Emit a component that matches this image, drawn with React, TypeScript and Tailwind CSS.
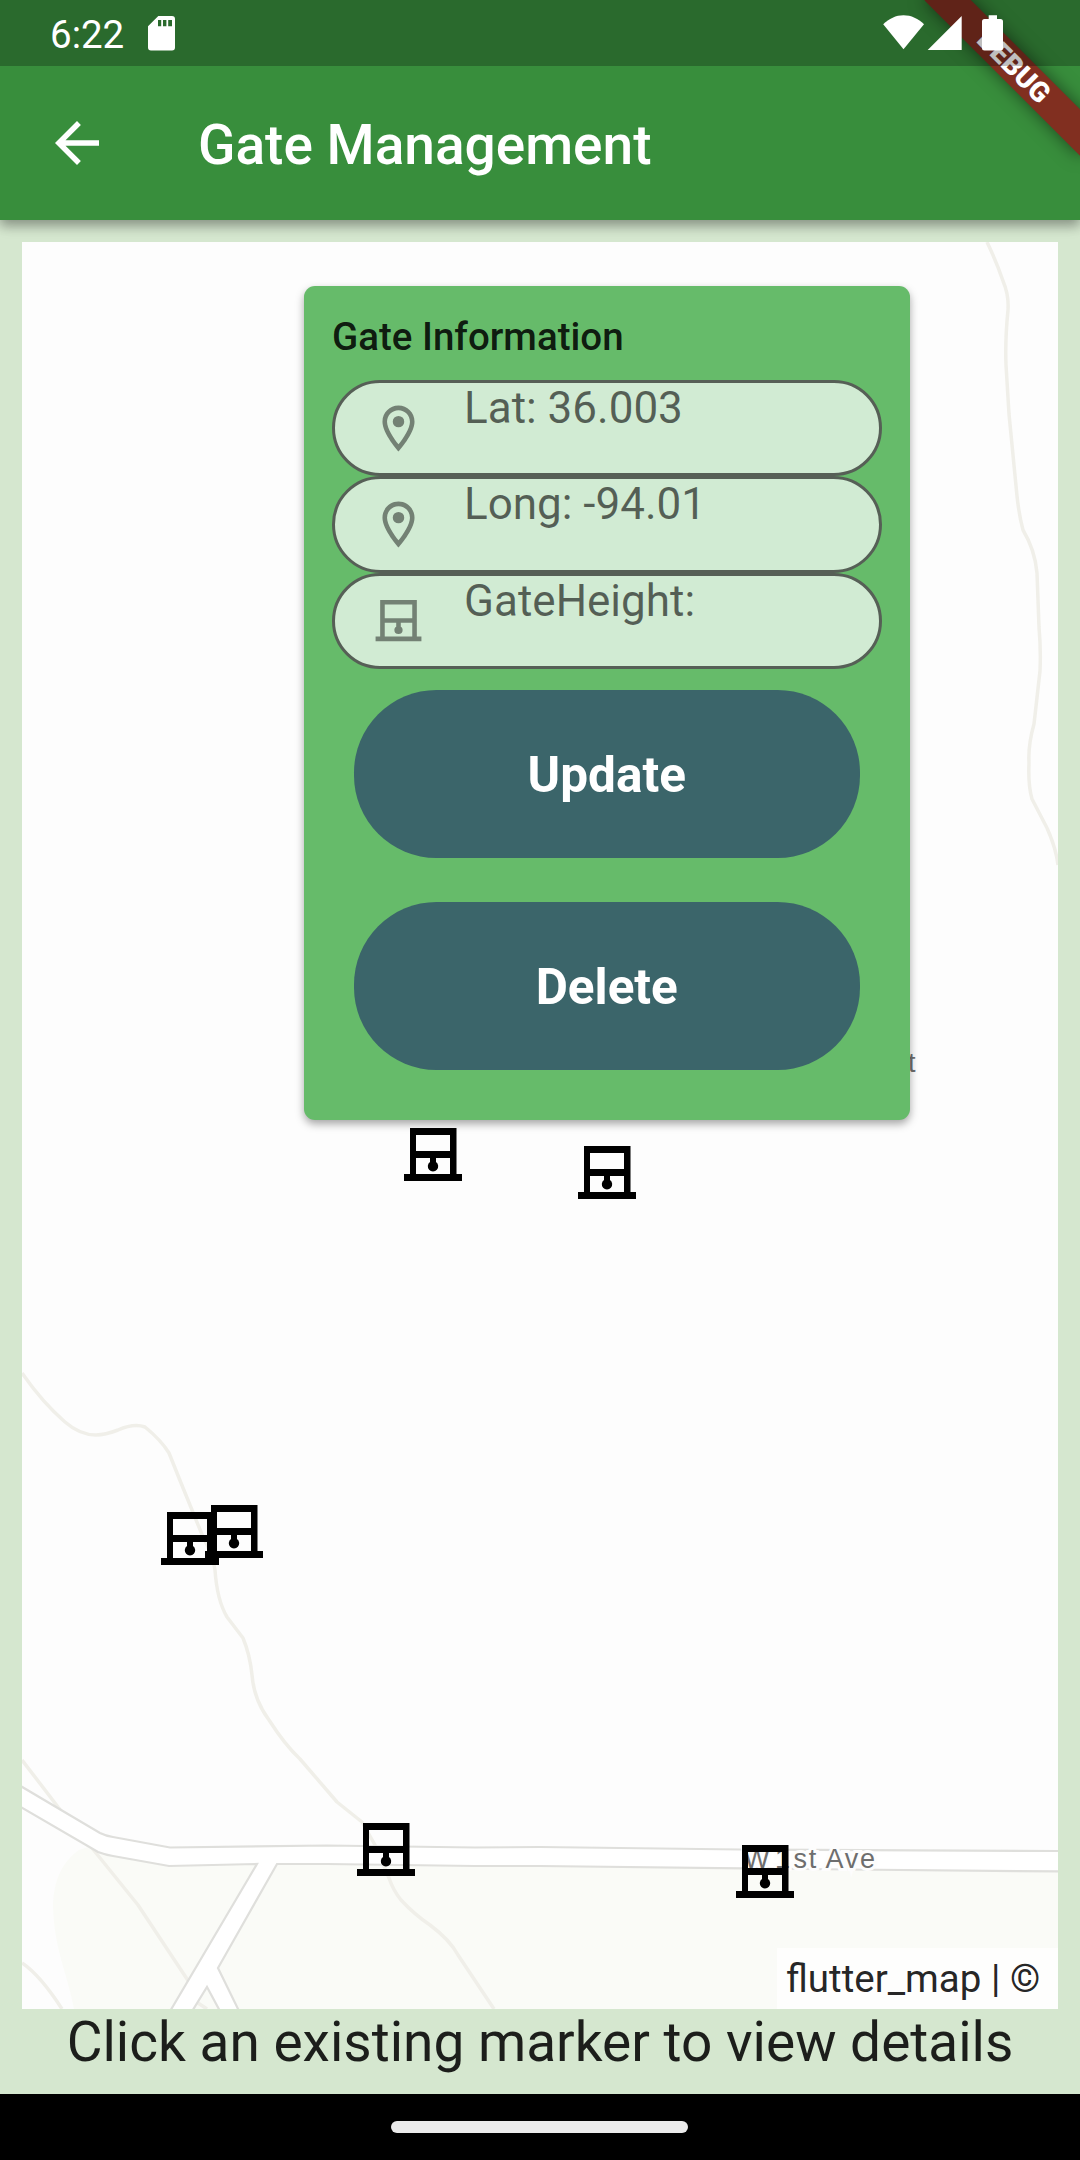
import type { ReactNode } from "react";

const ROBOTO = "font-['Roboto',sans-serif]";

function GateIcon({ className }: { className: string }) {
  return (
    <svg viewBox="0 0 24 24" fill="currentColor" className={className}>
      <path
        fillRule="evenodd"
        d="M20 19V3H4v16H2v2h20v-2h-2zM18 5v6H6V5h12zM6 19v-6h5v1.7c-.5.3-.8.8-.8 1.4a1.8 1.8 0 0 0 3.6 0c0-.6-.3-1.1-.8-1.4V13h5v6H6z"
      />
    </svg>
  );
}

function GateMarker() {
  return (
    <svg viewBox="0 0 58 53" className="block h-[53px] w-[58px]">
      <path
        fillRule="evenodd"
        d="M52.500 46V0H6v46H0v7h58v-7zM46 7v16H12V7zM12 46V30h14v4a5.200 5.200 0 1 0 6 0v-4h14v16z"
      />
    </svg>
  );
}

function PlaceIcon({ className }: { className: string }) {
  return (
    <svg viewBox="0 0 24 24" fill="currentColor" className={className}>
      <path d="M12 2C8.13 2 5 5.13 5 9c0 5.25 7 13 7 13s7-7.75 7-13c0-3.87-3.13-7-7-7zM7 9c0-2.76 2.24-5 5-5s5 2.24 5 5c0 2.88-2.88 7.19-5 9.88C9.92 16.21 7 11.85 7 9z" />
      <circle cx="12" cy="9" r="2.5" />
    </svg>
  );
}

function StatusBar() {
  return (
    <div className="absolute inset-x-0 top-0 z-30 flex h-[66px] justify-between bg-black/25 text-white">
      <div className="flex pl-[50px]">
        <span className="mt-[12px] text-[38.5px] leading-[45px]">6:22</span>
        <svg viewBox="0 0 27 35" className="mt-[16px] ml-[24px] h-[35px] w-[27px]">
          <path
            fill="#fff"
            fillRule="evenodd"
            d="M10.3 0H24a3 3 0 0 1 3 3v28.500a3 3 0 0 1-3 3H3a3 3 0 0 1-3-3V10.300zM10 4v6.300h3.200V4zM15 4v6.300h3.400V4zM20.200 4v6.300h3.800V4z"
          />
        </svg>
      </div>
      <svg viewBox="883 15 121 36" className="mt-[15px] mr-[76px] h-[36px] w-[121px]" fill="#fff">
        <path d="M903.500 49.300 883.200 24.300C889 18.500 896 15.200 903.500 15.200S918.500 18.500 924 24.300z" />
        <path d="M961.700 16v34h-34z" />
        <path d="M988.700 15.200h8.300V19h3.500a2.500 2.500 0 0 1 2.500 2.500v26.500a2.500 2.500 0 0 1-2.500 2.500h-16a2.500 2.500 0 0 1-2.500-2.500V21.500a2.500 2.500 0 0 1 2.500-2.500h4.200z" />
      </svg>
    </div>
  );
}

function DebugBanner() {
  return (
    <div className="pointer-events-none absolute top-0 right-0 z-20 h-[242px] w-[242px] overflow-hidden">
      <div className="absolute top-[49.5px] left-[66px] flex h-[33px] w-[220px] rotate-45 items-center justify-center bg-[#812f20] text-[28px] leading-none font-black text-white shadow-[0_0_17px_rgba(0,0,0,0.5)]">
        DEBUG
      </div>
    </div>
  );
}

function AppBar() {
  return (
    <header className="relative z-10 flex h-[220px] items-center bg-[#388e3c] pt-[66px] pl-[44px] text-white shadow-[0_6px_11px_rgba(0,0,0,0.28),0_3px_14px_rgba(0,0,0,0.14)]">
      <svg viewBox="0 0 24 24" fill="currentColor" className="size-[66px]">
        <path d="M20 11H7.830l5.590-5.590L12 4l-8 8 8 8 1.410-1.410L7.830 13H20v-2z" />
      </svg>
      <h1 className="ml-[88px] pt-[4px] text-[55px] leading-[64px] font-medium">Gate Management</h1>
    </header>
  );
}

const MARKERS = [
  { id: 1, place: "left-[382px] top-[886px]" },
  { id: 2, place: "left-[556px] top-[904px]" },
  { id: 3, place: "left-[139px] top-[1270px]" },
  { id: 4, place: "left-[183px] top-[1263px]" },
  { id: 5, place: "left-[335px] top-[1581px]" },
  { id: 6, place: "left-[714px] top-[1603px]" },
];

function MapTiles() {
  return (
    <svg viewBox="22 242 1036 1767" className="block h-full w-full">
      <path d="M79 1850C62 1862 54 1880 53 1905C54 1950 68 1975 74 2009H1058V1861L540 1856L170 1857L100 1843z" fill="#fafbf7" />
      <g fill="none" stroke="#f0efe9" strokeWidth="3.5" strokeLinejoin="round">
        <path d="M987 242Q997 263 1003 281Q1009 295 1008 310Q1005 340 1006 365L1009 414L1017 496Q1019 515 1023 530Q1035 550 1037 573L1039 627Q1041 650 1040 671L1034 724Q1028 745 1029 763Q1028 785 1032 799L1047 828Q1056 848 1058 865" />
        <path d="M22 1373Q42 1402 65 1422Q80 1435 96 1435Q105 1435 118 1430Q134 1423 145 1427Q161 1440 169 1453L179 1478L203 1537Q213 1555 215 1570Q217 1600 227 1617L243 1638Q250 1655 252 1675Q254 1700 269 1720Q285 1745 300 1759L337 1802L362 1822L375 1845L389 1878Q393 1890 401 1900Q415 1915 430 1925Q450 1940 458 1955L494 2009" />
        <path d="M22 1760L58 1807L96 1853L138 1905L189 1982" />
        <path d="M22 1963Q40 1975 62 2009M198 2003L207 2009" />
      </g>
      <path
        d="M18 1784.500L100 1833Q106 1836 113 1837L170 1847.500L327 1845.500L475 1847.500L540 1847L740 1849.500L1062 1851V1871.500L850 1869.500L540 1866L475 1866L327 1864H277L218 1968L240 2013H221L207 1987L191 2013H169L257 1864L169 1866L113 1856Q106 1855 98 1852L18 1805.500z"
        fill="#fff"
        stroke="#dfdfdc"
        strokeWidth="2.2"
      />
      <g fill="#6e6e6e" className="font-['Liberation_Sans',sans-serif] text-[27px]">
        <g stroke="#fdfdfd" strokeWidth="6" className="[paint-order:stroke]">
          <text x="744" y="1868">W</text>
          <text x="775" y="1868">1</text>
          <text x="793.500" y="1868" textLength="81.500">st Ave</text>
        </g>
        <text x="894.500" y="1072">st</text>
      </g>
    </svg>
  );
}

function Field({ icon, children }: { icon: ReactNode; children: ReactNode }) {
  return (
    <div className="flex h-[96.3px] rounded-full border-3 border-[#565f56] bg-[#d1ebd3]">
      <span className="flex w-[129px] items-center justify-center pr-[2px] text-black/45">{icon}</span>
      <span className="text-[44px] leading-[51px] text-black/60">{children}</span>
    </div>
  );
}

function ActionButton({ children }: { children: ReactNode }) {
  return (
    <button className="h-[168px] rounded-[82.5px] bg-[#3b656a] pt-[2px] text-[49.5px] leading-[58px] font-bold text-white">
      {children}
    </button>
  );
}

function GateCard() {
  return (
    <section className="absolute top-[44px] left-[282px] flex h-[833.5px] w-[605.5px] flex-col rounded-[11px] bg-[#66bb6a] px-[28px] shadow-[0_4px_8px_rgba(0,0,0,0.35)]">
      <h2 className="pt-[28px] text-[38.5px] leading-[45px] font-medium text-black/87">Gate Information</h2>
      <div className="mt-[21px] flex flex-col">
        <Field icon={<PlaceIcon className="size-[55px]" />}>Lat: 36.003</Field>
        <Field icon={<PlaceIcon className="size-[55px]" />}>Long: -94.01</Field>
        <Field icon={<GateIcon className="size-[55px]" />}>GateHeight:</Field>
      </div>
      <div className="mx-[22px] mt-[21px] flex flex-col gap-[44px]">
        <ActionButton>Update</ActionButton>
        <ActionButton>Delete</ActionButton>
      </div>
    </section>
  );
}

export default function App() {
  return (
    <div className={`relative flex h-[2160px] w-[1080px] flex-col overflow-hidden bg-[#d5e7cf] ${ROBOTO}`}>
      <StatusBar />
      <DebugBanner />
      <AppBar />
      <main className="relative mx-[22px] mt-[22px] h-[1767px] overflow-hidden bg-[#fdfdfd]">
        <MapTiles />
        {MARKERS.map((m) => (
          <span key={m.id} className={`absolute text-black ${m.place}`}>
            <GateMarker />
          </span>
        ))}
        <GateCard />
        <div className="absolute right-0 bottom-0 h-[61px] w-[281px] bg-white/75 pt-[8px] pl-[9px] text-[38.5px] leading-[45px] whitespace-nowrap text-black/87">
          flutter_map | ©
        </div>
      </main>
      <p className="h-[85px] pt-[1px] text-center text-[55px] leading-[64px] text-black/87">
        Click an existing marker to view details
      </p>
      <footer className="flex h-[66px] justify-center bg-black pt-[27px] pr-px">
        <div className="h-[12px] w-[297px] rounded-full bg-[#ebebeb]" />
      </footer>
    </div>
  );
}
